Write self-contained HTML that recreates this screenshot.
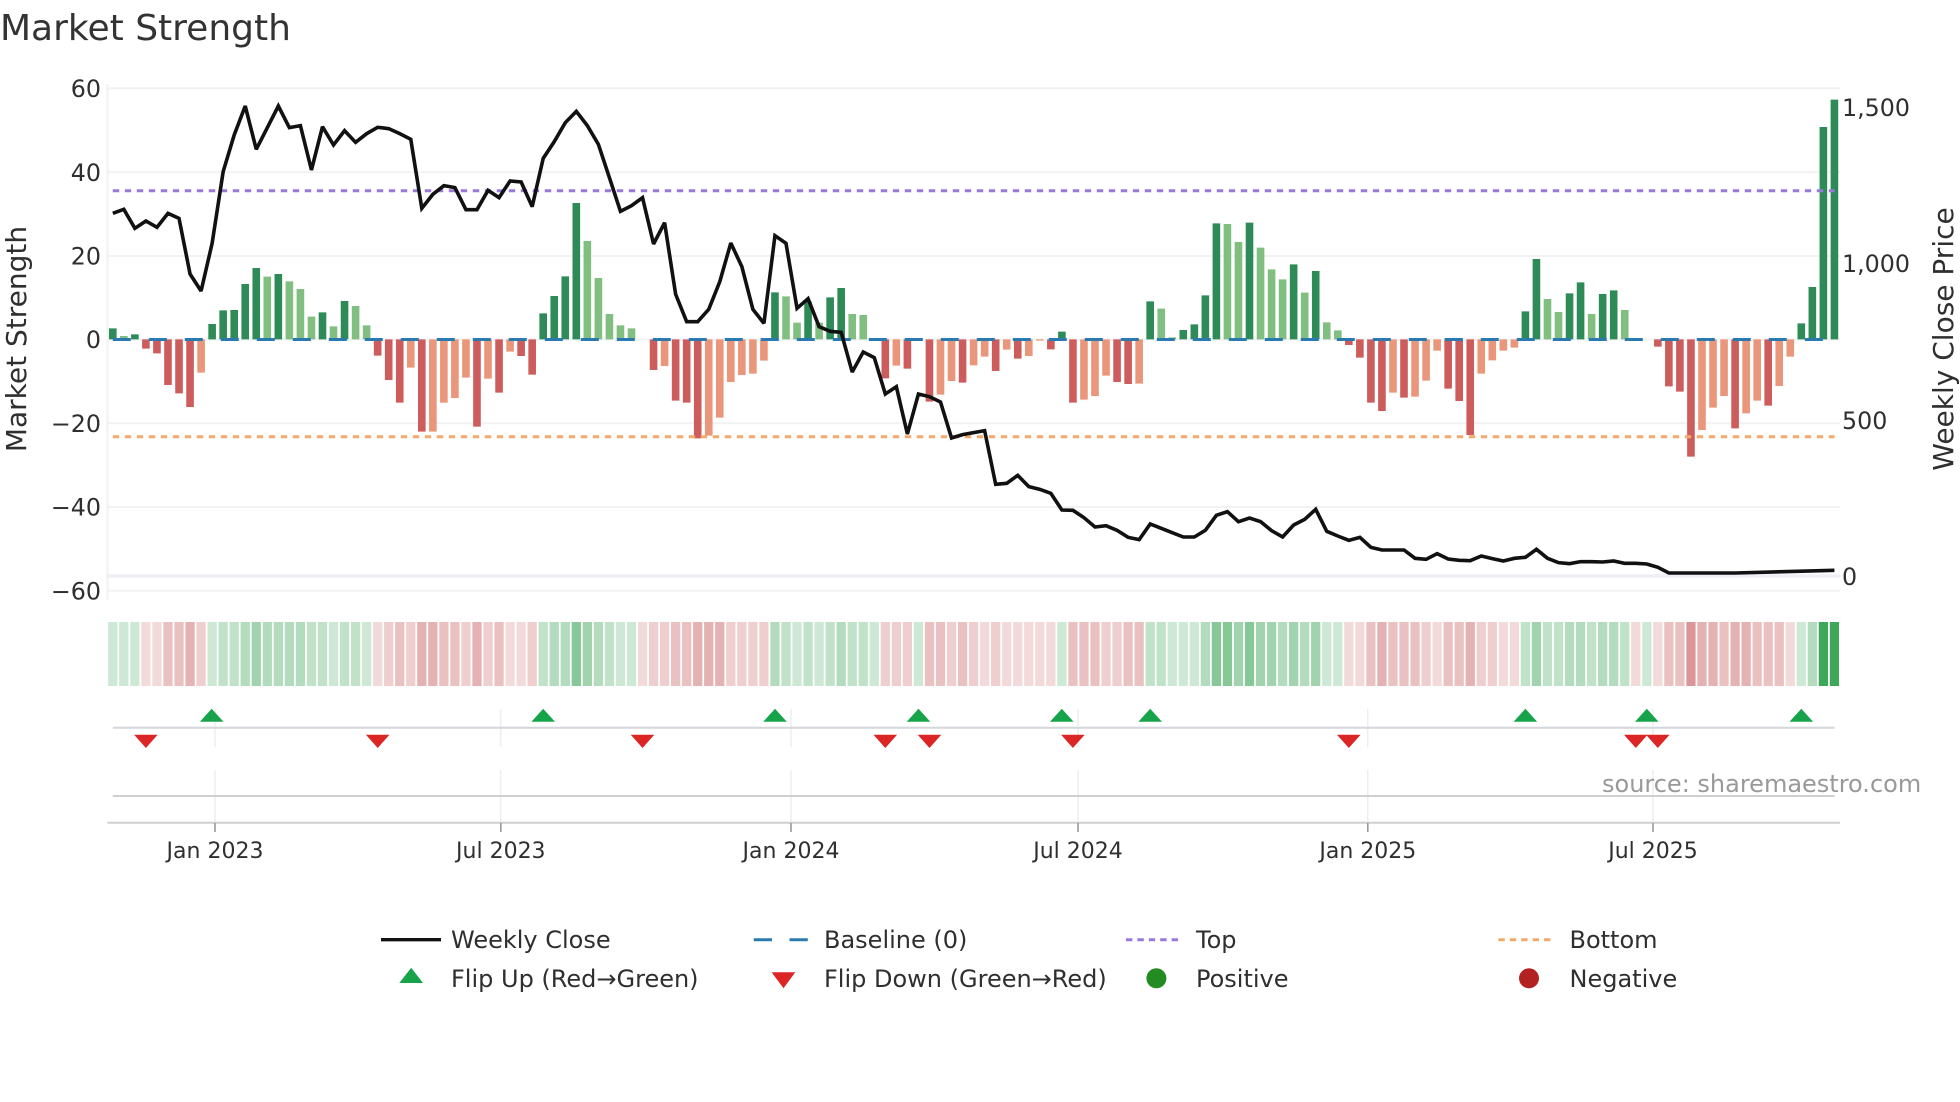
<!DOCTYPE html>
<html><head><meta charset="utf-8"><title>Market Strength</title>
<style>
html,body{margin:0;padding:0;background:#fff}
svg{display:block}
text{font-family:"DejaVu Sans","Liberation Sans",sans-serif;fill:#2f2f2f}
</style></head>
<body>
<svg width="1960" height="1102" viewBox="0 0 1960 1102" xmlns="http://www.w3.org/2000/svg">
<rect width="1960" height="1102" fill="#fff"/>
<text x="0" y="40" font-size="36" style="fill:#333">Market Strength</text>

<!-- grid -->
<g stroke="#f0f2f4" stroke-width="2" fill="none">
<path d="M107 88.3H1840M107 172.3H1840M107 256H1840M107 339.5H1840M107 423.3H1840M107 507H1840M107 590.7H1840M107.5 84V600"/>
</g>
<path d="M107 576H1840" stroke="#eef0f6" stroke-width="3.4" fill="none"/>

<!-- bars -->
<g transform="translate(112.8 60) scale(11.036 .33333)" stroke-width=".69" fill="none">
<path stroke="#2e8b57" d="M0 838V805M2 838V823M9 838V792M10 838V751M11 838V750M12 838V672M13 838V624M15 838V642M19 838V757M21 838V723M39 838V760M40 838V708M41 838V649M42 838V429M60 838V697M63 838V725M65 838V712M66 838V684M86 838V815M94 838V724M97 838V810M98 838V793M99 838V706M100 838V490M103 838V488M107 838V613M109 838V633M128 838V754M129 838V597M132 838V700M133 838V667M135 838V702M136 838V691M153 838V790M154 838V681M155 838V201M156 838V119"/>
<path stroke="#80bf80" d="M1 838V828M14 838V650M16 838V664M17 838V687M18 838V770M20 838V799M22 838V738M23 838V796M43 838V543M44 838V654M45 838V762M46 838V796M47 838V805M61 838V709M62 838V788M64 838V788M67 838V762M68 838V765M95 838V746M96 838V832M101 838V492M102 838V546M104 838V563M105 838V628M106 838V658M108 838V698M110 838V787M111 838V811M130 838V717M131 838V756M134 838V762M137 838V750"/>
<path stroke="#cd5c5c" d="M3 838V866M4 838V880M5 838V975M6 838V1000M7 838V1041M24 838V887M25 838V960M26 838V1028M28 838V1115M33 838V1100M35 838V998M37 838V888M38 838V944M49 838V930M51 838V1022M52 838V1028M53 838V1135M70 838V955M72 838V926M74 838V1025M77 838V968M80 838V933M82 838V896M85 838V868M87 838V1028M91 838V966M92 838V972M112 838V855M113 838V893M114 838V1028M115 838V1053M117 838V1013M121 838V986M122 838V1023M123 838V1125M140 838V860M141 838V979M142 838V995M143 838V1190M147 838V1105M150 838V1037"/>
<path stroke="#e9967a" d="M8 838V938M27 838V923M29 838V1115M30 838V1028M31 838V1014M32 838V953M34 838V956M36 838V875M50 838V918M54 838V1127M55 838V1073M56 838V966M57 838V945M58 838V941M59 838V902M71 838V917M75 838V1004M76 838V963M78 838V916M79 838V890M81 838V869M83 838V888M84 838V842M88 838V1019M89 838V1008M90 838V947M93 838V971M116 838V998M118 838V1010M119 838V962M120 838V872M124 838V941M125 838V901M126 838V872M127 838V863M144 838V1110M145 838V1043M146 838V1008M148 838V1060M149 838V1022M151 838V978M152 838V890"/>
</g>

<!-- reference lines -->
<path d="M112.8 339.5H1834.5" stroke="#2a7ab0" stroke-width="3" stroke-dasharray="18 18" fill="none"/>
<path d="M112.8 190.7H1834.5" stroke="#9a78dc" stroke-width="3" stroke-dasharray="6.4 5.6" fill="none"/>
<path d="M112.8 436.7H1834.5" stroke="#f2a96c" stroke-width="3" stroke-dasharray="6.4 5.6" fill="none"/>

<!-- weekly close -->
<g transform="translate(112.8 60) scale(11.036 .33333)">
<polyline vector-effect="non-scaling-stroke" fill="none" stroke="#111" stroke-width="3.6" stroke-linejoin="miter" stroke-miterlimit="2.5" points="0,460 1,448 2,505 3,483 4,502 5,460 6,475 7,642 8,693 9,550 10,335 11,225 12,138 13,268 14,203 15,138 16,203 17,197 18,330 19,200 20,255 21,212 22,247 23,221 24,202 25,206 26,221 27,238 28,445 29,403 30,377 31,383 32,449 33,449 34,391 35,413 36,363 37,366 38,440 39,295 40,245 41,188 42,154 43,197 44,253 45,353 46,454 47,437 48,413 49,552 50,488 51,703 52,785 53,785 54,748 55,665 56,549 57,620 58,748 59,790 60,527 61,550 62,745 63,716 64,800 65,814 66,817 67,936 68,876 69,893 70,1002 71,980 72,1122 73,1002 74,1010 75,1026 76,1134 77,1124 78,1118 79,1112 80,1273 81,1270 82,1246 83,1280 84,1288 85,1300 86,1350 87,1351 88,1373 89,1401 90,1397 91,1411 92,1432 93,1439 94,1392 95,1405 96,1418 97,1431 98,1431 99,1411 100,1366 101,1355 102,1385 103,1374 104,1385 105,1412 106,1431 107,1395 108,1378 109,1348 110,1414 111,1428 112,1441 113,1432 114,1462 115,1470 116,1470 117,1470 118,1495 119,1498 120,1481 121,1497 122,1501 123,1502 124,1488 125,1496 126,1503 127,1495 128,1492 129,1468 130,1495 131,1508 132,1511 133,1505 134,1505 135,1506 136,1503 137,1510 138,1510 139,1512 140,1522 141,1539 147,1539 156,1531"/>
</g>

<!-- heat strip -->
<g transform="translate(112.8 622) scale(11.036 1)" stroke-width=".84" fill="none">
<g stroke="rgb(46,160,75)">
<path stroke-opacity=".24" d="M0 0V64M1 0V64M2 0V64M9 0V64M20 0V64M23 0V64M46 0V64M47 0V64M62 0V64M64 0V64M69 0V64M73 0V64M86 0V64M96 0V64M97 0V64M98 0V64M110 0V64M111 0V64M139 0V64M153 0V64"/>
<path stroke-opacity=".3" d="M10 0V64M11 0V64M18 0V64M19 0V64M21 0V64M22 0V64M39 0V64M45 0V64M61 0V64M63 0V64M65 0V64M67 0V64M68 0V64M94 0V64M95 0V64M128 0V64M130 0V64M131 0V64M134 0V64M137 0V64"/>
<path stroke-opacity=".37" d="M12 0V64M14 0V64M15 0V64M16 0V64M17 0V64M40 0V64M41 0V64M44 0V64M60 0V64M66 0V64M99 0V64M106 0V64M108 0V64M132 0V64M133 0V64M135 0V64M136 0V64M154 0V64"/>
<path stroke-opacity=".45" d="M13 0V64M43 0V64M102 0V64M104 0V64M105 0V64M107 0V64M109 0V64M129 0V64"/>
<path stroke-opacity=".58" d="M42 0V64M100 0V64M101 0V64M103 0V64"/>
<path stroke-opacity=".92" d="M155 0V64M156 0V64"/>
</g>
<g stroke="rgb(178,34,34)">
<path stroke-opacity=".17" d="M3 0V64M4 0V64M24 0V64M36 0V64M37 0V64M48 0V64M79 0V64M81 0V64M82 0V64M83 0V64M84 0V64M85 0V64M112 0V64M113 0V64M120 0V64M126 0V64M127 0V64M138 0V64M140 0V64M152 0V64"/>
<path stroke-opacity=".22" d="M8 0V64M25 0V64M27 0V64M32 0V64M34 0V64M38 0V64M49 0V64M50 0V64M56 0V64M57 0V64M58 0V64M59 0V64M70 0V64M71 0V64M72 0V64M76 0V64M78 0V64M80 0V64M90 0V64M91 0V64M119 0V64M124 0V64M125 0V64"/>
<path stroke-opacity=".28" d="M5 0V64M6 0V64M26 0V64M30 0V64M31 0V64M35 0V64M51 0V64M52 0V64M74 0V64M75 0V64M77 0V64M87 0V64M88 0V64M89 0V64M92 0V64M93 0V64M114 0V64M116 0V64M117 0V64M118 0V64M121 0V64M122 0V64M141 0V64M142 0V64M146 0V64M149 0V64M150 0V64M151 0V64"/>
<path stroke-opacity=".35" d="M7 0V64M28 0V64M29 0V64M33 0V64M53 0V64M54 0V64M55 0V64M115 0V64M123 0V64M144 0V64M145 0V64M147 0V64M148 0V64"/>
<path stroke-opacity=".47" d="M143 0V64"/>
</g>
</g>

<!-- lower panels -->
<g stroke="#eceef1" stroke-width="1.5" fill="none">
<path d="M215 709V747M215 770V822M500.8 709V747M500.8 770V822M791 709V747M791 770V822M1078 709V747M1078 770V822M1367.8 709V747M1367.8 770V822M1653 709V747M1653 770V822"/>
</g>
<path d="M112.8 727.7H1834.5" stroke="#d3d6db" stroke-width="2" fill="none"/>
<path d="M112.8 796H1834.5" stroke="#cfcfcf" stroke-width="2" fill="none"/>
<path d="M107.5 822.7H1840" stroke="#cfcfcf" stroke-width="2" fill="none"/>
<path d="M215 823V832M500.8 823V832M791 823V832M1078 823V832M1367.8 823V832M1653 823V832" stroke="#999" stroke-width="1.6" fill="none"/>

<!-- flips -->
<g fill="#16a34a">
<polygon points="211.7,708.7 223.5,721.7 199.9,721.7"/>
<polygon points="543.2,708.7 555,721.7 531.4,721.7"/>
<polygon points="775,708.7 786.8,721.7 763.2,721.7"/>
<polygon points="918.5,708.7 930.3,721.7 906.7,721.7"/>
<polygon points="1061.8,708.7 1073.6,721.7 1050,721.7"/>
<polygon points="1150.2,708.7 1162,721.7 1138.4,721.7"/>
<polygon points="1525.4,708.7 1537.2,721.7 1513.6,721.7"/>
<polygon points="1646.8,708.7 1658.6,721.7 1635,721.7"/>
<polygon points="1801.3,708.7 1813.1,721.7 1789.5,721.7"/>
</g>
<g fill="#dc2626">
<polygon points="145.9,748 134.1,734.7 157.7,734.7"/>
<polygon points="377.7,748 365.9,734.7 389.5,734.7"/>
<polygon points="642.5,748 630.7,734.7 654.3,734.7"/>
<polygon points="885.3,748 873.5,734.7 897.1,734.7"/>
<polygon points="929.5,748 917.7,734.7 941.3,734.7"/>
<polygon points="1072.9,748 1061.1,734.7 1084.7,734.7"/>
<polygon points="1348.8,748 1337,734.7 1360.6,734.7"/>
<polygon points="1635.8,748 1624,734.7 1647.6,734.7"/>
<polygon points="1657.8,748 1646,734.7 1669.6,734.7"/>
</g>

<!-- tick labels -->
<g font-size="23.75" text-anchor="end">
<text x="101" y="97">60</text>
<text x="101" y="181">40</text>
<text x="101" y="264.7">20</text>
<text x="101" y="348.2">0</text>
<text x="101" y="432">−20</text>
<text x="101" y="515.7">−40</text>
<text x="101" y="599.4">−60</text>
</g>
<g font-size="23.75">
<text x="1842" y="116">1,500</text>
<text x="1842" y="272">1,000</text>
<text x="1842" y="429">500</text>
<text x="1842" y="585">0</text>
</g>
<text transform="translate(26 339) rotate(-90)" text-anchor="middle" font-size="28">Market Strength</text>
<text transform="translate(1953 339) rotate(-90)" text-anchor="middle" font-size="28">Weekly Close Price</text>
<g font-size="22" text-anchor="middle">
<text x="215" y="858">Jan 2023</text>
<text x="500.8" y="858">Jul 2023</text>
<text x="791" y="858">Jan 2024</text>
<text x="1078" y="858">Jul 2024</text>
<text x="1367.8" y="858">Jan 2025</text>
<text x="1653" y="858">Jul 2025</text>
</g>
<text x="1602" y="792" font-size="24" style="fill:#999">source: sharemaestro.com</text>

<!-- legend -->
<path d="M381 939.7H441" stroke="#111" stroke-width="3.4" fill="none"/>
<path d="M753.8 939.7H772M789.5 939.7H807.8" stroke="#2a7ab0" stroke-width="3" fill="none"/>
<path d="M1126 939.7H1181" stroke="#9a78dc" stroke-width="3" stroke-dasharray="6.4 5" fill="none"/>
<path d="M1498.4 939.7H1553.3" stroke="#f2a96c" stroke-width="3" stroke-dasharray="6.4 5" fill="none"/>
<polygon points="411.2,967.7 423,983 399.3,983" fill="#16a34a"/>
<polygon points="783.5,988.3 771.6,972.3 795.3,972.3" fill="#dc2626"/>
<circle cx="1156.4" cy="978.3" r="10" fill="#228b22"/>
<circle cx="1529" cy="978.3" r="10" fill="#b22222"/>
<g font-size="24">
<text x="451" y="948">Weekly Close</text>
<text x="824" y="948">Baseline (0)</text>
<text x="1196" y="948">Top</text>
<text x="1569.5" y="948">Bottom</text>
<text x="451" y="987">Flip Up (Red→Green)</text>
<text x="824" y="987">Flip Down (Green→Red)</text>
<text x="1196" y="987">Positive</text>
<text x="1569.5" y="987">Negative</text>
</g>
</svg>
</body></html>
